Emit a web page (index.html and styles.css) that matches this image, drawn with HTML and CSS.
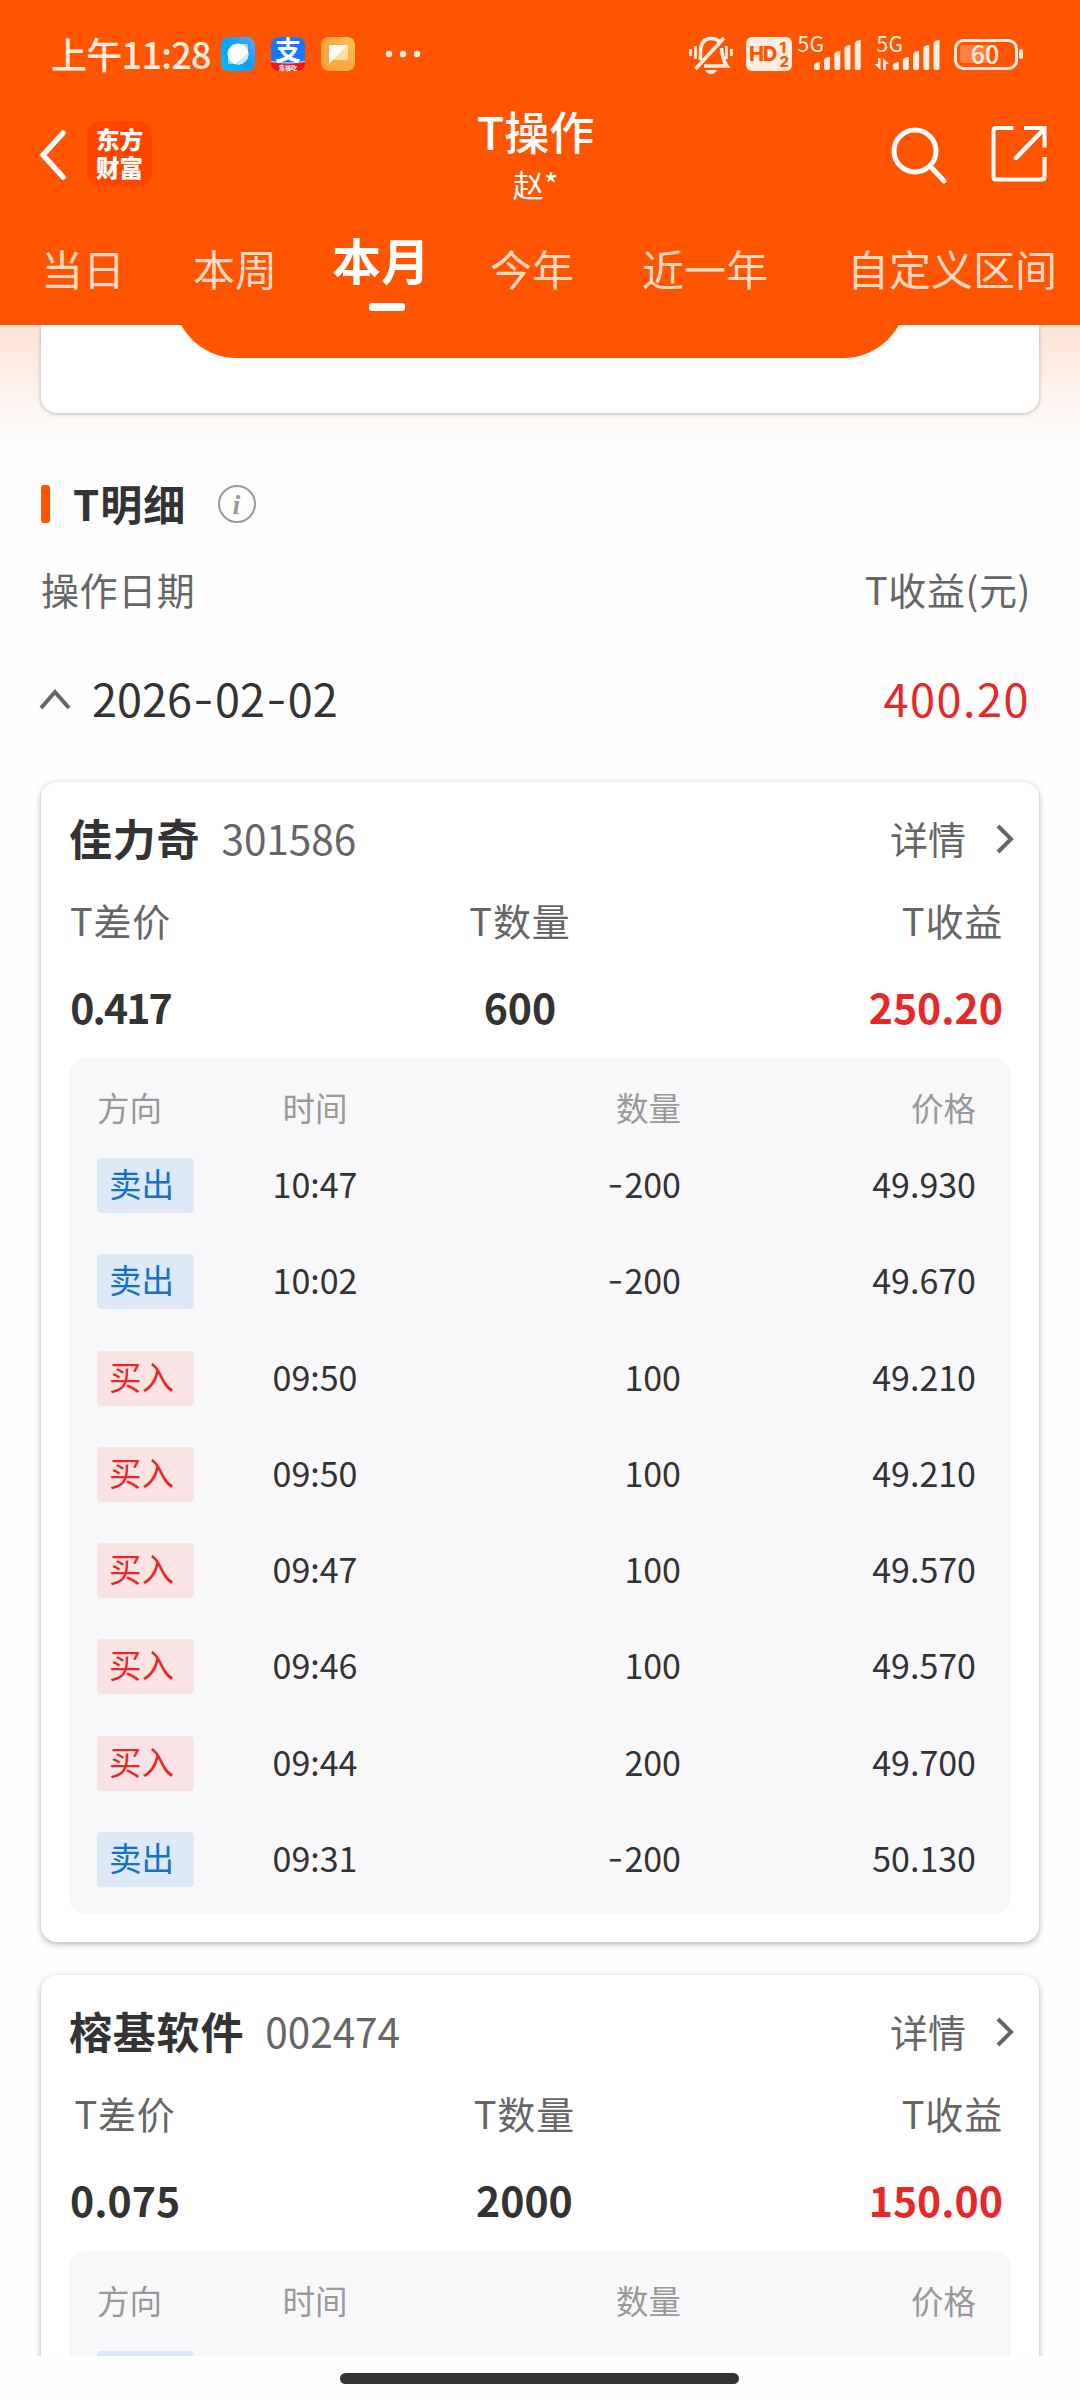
FILE: index.html
```html
<!DOCTYPE html>
<html lang="zh-CN">
<head>
<meta charset="utf-8">
<title>T操作</title>
<link rel="stylesheet" href="styles.css">
</head>
<body>
<div class="screen">
  <header class="header">
    <div class="status">
      <span class="clock">上午11:28</span>
      <svg class="app-icon" width="34" height="34" viewBox="0 0 34 34">
        <defs><linearGradient id="blue" x1="0" y1="1" x2="1" y2="0"><stop offset="0" stop-color="#00c2ff"/><stop offset=".5" stop-color="#06a0ff"/><stop offset="1" stop-color="#5aa6ff"/></linearGradient></defs>
        <rect width="34" height="34" rx="8" fill="url(#blue)"/>
        <path d="M7 17v10h10zM17 7h10v10z" fill="#8fd0ff"/>
        <circle cx="17" cy="17" r="10.5" fill="#fff"/>
        <path d="M27.5 16A10.5 10.5 0 0 1 14 27z" fill="#cfe5ff"/>
      </svg>
      <svg class="app-icon" width="34" height="34" viewBox="0 0 34 34">
        <defs><clipPath id="round"><rect width="34" height="34" rx="8"/></clipPath></defs>
        <g clip-path="url(#round)">
          <rect width="34" height="34" fill="#1677ff"/>
          <path d="M0 24.500q17 5 34 0V34H0z" fill="#f5131c"/>
          <path d="M0 24.500q17 3 34 0" fill="none" stroke="#ffd9a0" stroke-width="1.200"/>
        </g>
        <text x="17" y="22.500" class="alipay">支</text>
        <text x="17" y="32.500" class="alipay-tag">集福吃</text>
      </svg>
      <svg class="app-icon" width="34" height="34" viewBox="0 0 34 34">
        <defs><linearGradient id="amber" x1="0" y1="1" x2="1" y2="0"><stop offset="0" stop-color="#ff9f3c"/><stop offset=".6" stop-color="#ffab42"/><stop offset="1" stop-color="#ffd052"/></linearGradient></defs>
        <rect width="34" height="34" rx="8" fill="url(#amber)"/>
        <path d="M8 8h17q2 0 2 2v11q0 2-2 2H13z" fill="#ffdfa8"/>
        <path d="M8 27V10q0-2 2-2h16.500z" fill="#fffdf6"/>
      </svg>
      <svg class="more" width="36" height="8" viewBox="0 0 36 8" fill="#ffede2"><circle cx="4" cy="4" r="3.200"/><circle cx="18" cy="4" r="3.200"/><circle cx="32" cy="4" r="3.200"/></svg>
      <svg class="system" width="336" height="48" viewBox="688 30 336 48">
        <g fill="none" stroke="#ffede2" stroke-width="3.600">
          <path d="M700.500 60V50Q701.500 38.500 711 38.500Q716 38.500 719 41M721.500 48Q722.500 60 727 66H704M695.500 69L724 38"/>
          <path d="M690.500 49v7M695.500 46v13M726.500 46v13M731.500 49v7" stroke-width="2.800"/>
        </g>
        <path d="M705 70h12q-2 4-6 4t-6-4z" fill="#ffede2"/>
        <rect x="746" y="37" width="46" height="34" rx="6" fill="#ffede2"/>
        <text x="749" y="61" class="hd">HD</text>
        <text x="779.500" y="52.500" class="hd-num">1</text>
        <text x="779.500" y="67" class="hd-num">2</text>
        <text x="797.500" y="52" class="net">5G</text>
        <text x="876.500" y="52" class="net">5G</text>
        <g fill="#ffede2">
          <path id="bars" d="M814 65q1-3 6-3v6q0 2-2 2h-2q-2 0-2-2zM824 60q1-3 6-3v11q0 2-2 2h-2q-2 0-2-2zM834.300 54q1-3 6-3v17q0 2-2 2h-2q-2 0-2-2zM844.500 48q1-3 6-3v23q0 2-2 2h-2q-2 0-2-2zM854.700 43q1-3 6-3v28q0 2-2 2h-2q-2 0-2-2z"/>
          <use href="#bars" x="78.800"/>
          <path d="M878 58h2.500v12l-6-6H878zM883 70V58l6 6h-3.200v6z"/>
        </g>
        <rect x="955.500" y="40.500" width="61" height="28" rx="8" fill="none" stroke="#ffede2" stroke-width="3"/>
        <path d="M963 45h27v18h-27q-3 0-3-3V48q0-3 3-3z" fill="#ff8040"/>
        <rect x="1019" y="49" width="4" height="10" rx="2" fill="#ffede2"/>
        <text x="985" y="63.500" class="battery">60</text>
      </svg>
    </div>
    <div class="nav">
      <div class="nav-left">
        <svg width="28" height="52" viewBox="0 0 28 52"><path d="M24 4L4 26L24 48" fill="none" stroke="#fff" stroke-width="5.500" stroke-linecap="round"/></svg>
        <div class="logo"><span>东方</span><span>财富</span></div>
      </div>
      <div class="nav-title"><span class="title">T操作</span><span class="user">赵*</span></div>
      <div class="nav-right">
        <svg width="58" height="58" viewBox="0 0 58 58" fill="none" stroke="#fff" stroke-width="5"><circle cx="25" cy="25" r="21"/><path d="M40 40L54 55" stroke-linecap="round"/></svg>
        <svg width="56" height="56" viewBox="0 0 56 56" fill="none" stroke="#fff" stroke-width="4"><path d="M22.500 2H5Q2.500 2 2.500 4.500V51Q2.500 53.500 5 53.500H51Q53.500 53.500 53.500 51V31M33 2H53.500V21.500"/><path d="M53 3L25 32" stroke-width="4.500" stroke-linecap="round"/></svg>
      </div>
    </div>
    <nav class="tabs">
      <span>当日</span><span>本周</span><span class="active">本月</span><span>今年</span><span>近一年</span><span>自定义区间</span>
    </nav>
  </header>

  <main class="content">
    <section class="summary"><div class="summary-card"><div class="pill"></div></div></section>
    <div class="section-head">
      <i class="marker"></i><h2>T明细</h2>
      <svg width="38" height="38" viewBox="0 0 38 38"><circle cx="19" cy="19" r="18" fill="none" stroke="#999" stroke-width="2"/><text x="18.500" y="28.500" class="info">i</text></svg>
    </div>
    <div class="list-head"><span>操作日期</span><span>T收益(元)</span></div>
    <div class="date-row">
      <svg width="32" height="22" viewBox="0 0 32 22"><path d="M2 20L16 4L30 20" fill="none" stroke="#666" stroke-width="4"/></svg>
      <span class="date">2026<i>-</i>02<i>-</i>02</span><span class="total">400.20</span>
    </div>

    <article class="card">
      <div class="card-head"><b>佳力奇</b><span class="code">301586</span><span class="detail">详情</span>
        <svg width="18" height="30" viewBox="0 0 18 30"><path d="M2 2L15 15L2 28" fill="none" stroke="#666" stroke-width="4"/></svg></div>
      <div class="stats">
        <div><span>T差价</span><b class="tight">0.417</b></div>
        <div><span>T数量</span><b>600</b></div>
        <div class="gain"><span>T收益</span><b>250.20</b></div>
      </div>
      <div class="trades">
        <div class="trade-head"><span>方向</span><span>时间</span><span>数量</span><span>价格</span></div>
        <div class="trade"><em class="sell">卖出</em><span>10:47</span><span><i>-</i>200</span><span>49.930</span></div>
        <div class="trade"><em class="sell">卖出</em><span>10:02</span><span><i>-</i>200</span><span>49.670</span></div>
        <div class="trade"><em class="buy">买入</em><span>09:50</span><span>100</span><span>49.210</span></div>
        <div class="trade"><em class="buy">买入</em><span>09:50</span><span>100</span><span>49.210</span></div>
        <div class="trade"><em class="buy">买入</em><span>09:47</span><span>100</span><span>49.570</span></div>
        <div class="trade"><em class="buy">买入</em><span>09:46</span><span>100</span><span>49.570</span></div>
        <div class="trade"><em class="buy">买入</em><span>09:44</span><span>200</span><span>49.700</span></div>
        <div class="trade"><em class="sell">卖出</em><span>09:31</span><span><i>-</i>200</span><span>50.130</span></div>
      </div>
    </article>

    <article class="card">
      <div class="card-head"><b>榕基软件</b><span class="code">002474</span><span class="detail">详情</span>
        <svg width="18" height="30" viewBox="0 0 18 30"><path d="M2 2L15 15L2 28" fill="none" stroke="#666" stroke-width="4"/></svg></div>
      <div class="stats">
        <div><span>T差价</span><b>0.075</b></div>
        <div><span>T数量</span><b>2000</b></div>
        <div class="gain"><span>T收益</span><b>150.00</b></div>
      </div>
      <div class="trades">
        <div class="trade-head"><span>方向</span><span>时间</span><span>数量</span><span>价格</span></div>
        <div class="trade"><em class="sell"></em></div>
      </div>
    </article>
  </main>
  <footer class="home"><i></i></footer>
</div>
</body>
</html>
```
FILE: styles.css
```css
* { box-sizing: border-box; }
body { margin: 0; background: #fefefe; font-family: "Noto Sans CJK SC", sans-serif; color: #333; }
i, em { font-style: normal; }
svg { display: block; flex: none; overflow: visible; }
.screen { width: 1080px; height: 2400px; display: flex; flex-direction: column; overflow: hidden; }

.header { height: 325px; flex: none; background: #ff5500; color: #fff; }
.status { height: 108px; padding: 0 56px 0 51px; display: flex; align-items: center; }
.clock { width: 170px; font-size: 36px; line-height: 50px; padding-bottom: 2px; font-weight: 500; letter-spacing: -.7px; color: #ffede2; white-space: nowrap; }
.app-icon { margin-right: 16px; }
.more { margin-left: 14px; }
.system { margin-left: auto; }
.alipay { font-size: 26px; font-weight: 700; fill: #fff; text-anchor: middle; }
.alipay-tag { font-size: 6px; font-weight: 700; fill: #fff; text-anchor: middle; }
.hd { font: 800 20px Inter, sans-serif; fill: #ff5500; letter-spacing: -1.2px; }
.hd-num { font: 800 15px Inter, sans-serif; fill: #ff5500; }
.net { font-size: 21px; fill: #ffede2; letter-spacing: .3px; }
.battery { font-size: 25px; font-weight: 500; fill: #ffede2; text-anchor: middle; }

.nav { height: 107px; padding: 0 48px 0 39px; display: grid; grid-template-columns: 1fr auto 1fr; }
.nav-left { display: flex; align-items: flex-start; gap: 20px; padding-top: 13px; }
.nav-left svg { margin-top: 8px; }
.logo { width: 65px; height: 66px; padding-bottom: 2px; border-radius: 14px; background: #ff4400; display: flex; flex-direction: column; align-items: center; justify-content: center; font-size: 23.500px; line-height: 28px; font-weight: 900; }
.nav-title { display: flex; flex-direction: column; align-items: center; margin-top: -3px; }
.title { font-size: 45px; line-height: 52px; font-weight: 500; }
.user { font-size: 31px; line-height: 46px; margin-top: 4px; }
.nav-right { display: flex; justify-content: flex-end; gap: 43px; padding-top: 18px; margin-right: -15px; }
.tabs { height: 110px; padding-left: 41px; display: grid; grid-template-columns: 152px 139px 158px 152px 205px auto; font-size: 42px; line-height: 105px; color: #ffd9c4; white-space: nowrap; }
.tabs .active { width: 98px; font-size: 49px; font-weight: 700; line-height: 88px; color: #fff; display: flex; flex-direction: column; align-items: center; }
.tabs .active::after { content: ""; width: 36px; height: 8px; border-radius: 3px; background: #fff; margin-left: 12px; }

.content { height: 2031px; flex: none; overflow: hidden; }
.summary { height: 120px; padding: 0 41px; background: linear-gradient(#fee3d6, #fefefe); }
.summary-card { height: 88px; background: #fff; border-radius: 0 0 16px 16px; box-shadow: 0 1px 4px rgba(0,0,0,.25); padding: 0 132px; }
.pill { height: 33px; overflow: hidden; display: flex; align-items: flex-end; }
.pill::before { content: ""; flex: 1; height: 128px; border-radius: 64px; background: #ff5500; }
.section-head { height: 118px; padding: 0 41px; display: flex; align-items: center; }
.marker { width: 9px; height: 38px; border-radius: 3px; background: #ff5500; }
h2 { margin: 0 32px 0 23px; padding-bottom: 3px; font-size: 42px; line-height: 60px; font-weight: 700; letter-spacing: 1px; }
.info { font: italic 700 28px "Liberation Serif", serif; fill: #999; text-anchor: middle; }
.list-head { height: 56px; padding: 0 49px 0 41px; display: flex; justify-content: space-between; font-size: 38px; line-height: 52px; letter-spacing: .6px; color: #666; }
.date-row { height: 163px; padding: 0 50px 4px 39px; display: flex; align-items: center; }
.date-row svg { margin-top: 1px; }
.date, .total { margin-left: 21px; font-size: 45px; line-height: 66px; padding-bottom: 2px; }
.date i, .trade i { display: inline-block; text-align: center; transform: scaleX(1.25) translateY(-.05em); }
.date i { width: 23px; }
.trade i { width: 17px; }
.total { margin-left: auto; letter-spacing: 1.500px; color: #e72828; }

.card { margin: 0 41px 33px; padding: 0 28px 28px; background: #fff; border-radius: 16px; box-shadow: 0 2px 6px rgba(0,0,0,.3); }
.card-head { height: 114px; display: flex; align-items: center; margin-right: -3px; }
.card-head svg { margin-left: 30px; }
.card-head b, .code, .detail { padding-bottom: 4px; }
.card-head b { font-size: 43px; letter-spacing: .8px; }
.code { margin-left: 21px; font-size: 40.500px; color: #666; }
.detail { margin-left: auto; font-size: 38px; color: #666; }
.stats { height: 162px; display: flex; justify-content: space-between; padding: 0 8px 0 1px; text-align: center; }
.stats span { display: block; font-size: 38px; line-height: 48px; letter-spacing: .8px; color: #666; }
.stats b { display: block; font-size: 41px; line-height: 60px; margin-top: 32px; }
.stats .tight { letter-spacing: -1.900px; }
.gain { text-align: right; }
.gain b { color: #e72828; }
.trades { background: #f8f8fa; border-radius: 16px; padding: 0 35px 0 28px; height: 856px; }
.trade-head, .trade { display: grid; grid-template-columns: 97px 242px 245px 295px; }
.trade-head { height: 100px; line-height: 97px; font-size: 32.500px; color: #999; }
.trade { height: 96.300px; font-size: 34px; line-height: 52px; }
.trade-head span:nth-child(2), .trade span:nth-child(2) { text-align: center; }
.trade-head span:nth-child(n+3), .trade span:nth-child(n+3) { text-align: right; }
.trade em { height: 55px; padding-left: 12px; border-radius: 4px; font-size: 32.500px; line-height: 50px; }
.sell { background: #dde9f6; color: #1470cc; }
.buy { background: #fae3e4; color: #e72828; }

.home { height: 44px; display: flex; justify-content: center; padding: 17px 1px 0 0; background: #fefefe; }
.home i { width: 399px; height: 11px; border-radius: 6px; background: #333; }
```
